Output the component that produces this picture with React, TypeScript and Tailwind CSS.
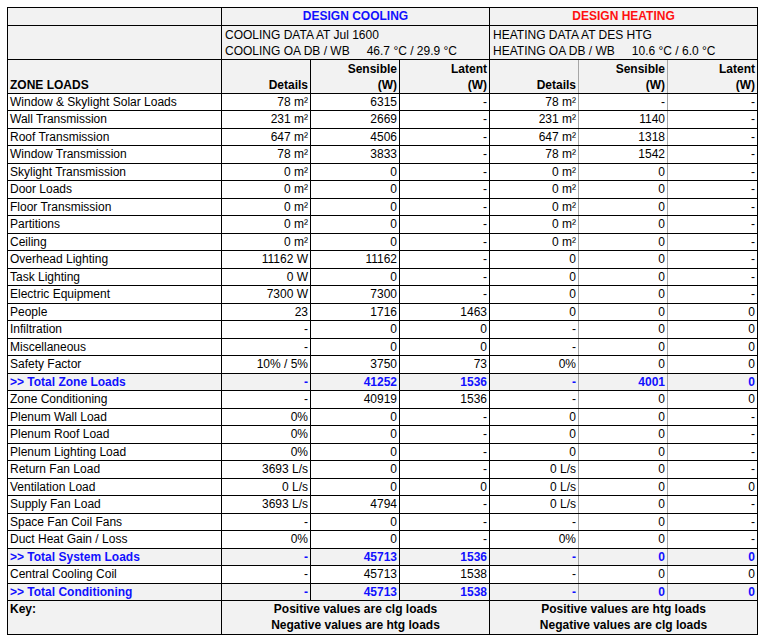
import React from "react";

type Row = { label: string; v: string[]; total?: boolean };

const rows: Row[] = [
  { label: "Window & Skylight Solar Loads", v: ["78 m²", "6315", "-", "78 m²", "-", "-"] },
  { label: "Wall Transmission", v: ["231 m²", "2669", "-", "231 m²", "1140", "-"] },
  { label: "Roof Transmission", v: ["647 m²", "4506", "-", "647 m²", "1318", "-"] },
  { label: "Window Transmission", v: ["78 m²", "3833", "-", "78 m²", "1542", "-"] },
  { label: "Skylight Transmission", v: ["0 m²", "0", "-", "0 m²", "0", "-"] },
  { label: "Door Loads", v: ["0 m²", "0", "-", "0 m²", "0", "-"] },
  { label: "Floor Transmission", v: ["0 m²", "0", "-", "0 m²", "0", "-"] },
  { label: "Partitions", v: ["0 m²", "0", "-", "0 m²", "0", "-"] },
  { label: "Ceiling", v: ["0 m²", "0", "-", "0 m²", "0", "-"] },
  { label: "Overhead Lighting", v: ["11162 W", "11162", "-", "0", "0", "-"] },
  { label: "Task Lighting", v: ["0 W", "0", "-", "0", "0", "-"] },
  { label: "Electric Equipment", v: ["7300 W", "7300", "-", "0", "0", "-"] },
  { label: "People", v: ["23", "1716", "1463", "0", "0", "0"] },
  { label: "Infiltration", v: ["-", "0", "0", "-", "0", "0"] },
  { label: "Miscellaneous", v: ["-", "0", "0", "-", "0", "0"] },
  { label: "Safety Factor", v: ["10% / 5%", "3750", "73", "0%", "0", "0"] },
  { label: ">> Total Zone Loads", v: ["-", "41252", "1536", "-", "4001", "0"], total: true },
  { label: "Zone Conditioning", v: ["-", "40919", "1536", "-", "0", "0"] },
  { label: "Plenum Wall Load", v: ["0%", "0", "-", "0", "0", "-"] },
  { label: "Plenum Roof Load", v: ["0%", "0", "-", "0", "0", "-"] },
  { label: "Plenum Lighting Load", v: ["0%", "0", "-", "0", "0", "-"] },
  { label: "Return Fan Load", v: ["3693 L/s", "0", "-", "0 L/s", "0", "-"] },
  { label: "Ventilation Load", v: ["0 L/s", "0", "0", "0 L/s", "0", "0"] },
  { label: "Supply Fan Load", v: ["3693 L/s", "4794", "-", "0 L/s", "0", "-"] },
  { label: "Space Fan Coil Fans", v: ["-", "0", "-", "-", "0", "-"] },
  { label: "Duct Heat Gain / Loss", v: ["0%", "0", "-", "0%", "0", "-"] },
  { label: ">> Total System Loads", v: ["-", "45713", "1536", "-", "0", "0"], total: true },
  { label: "Central Cooling Coil", v: ["-", "45713", "1538", "-", "0", "0"] },
  { label: ">> Total Conditioning", v: ["-", "45713", "1538", "-", "0", "0"], total: true },
];

const rowH = (i: number) => {
  const step = 507 / 29;
  const h = Math.round(93 + (i + 1) * step) - Math.round(93 + i * step);
  return h === 18 ? "h-[18px]" : "h-[17px]";
};

const valueBorder = (j: number) => {
  if (j === 3) return "border border-black border-r-[#a6a6a6]";
  if (j === 4) return "border border-black border-l-[#a6a6a6] border-r-[#a6a6a6]";
  if (j === 5) return "border border-black border-l-[#a6a6a6]";
  return "border border-black";
};

export default function App() {
  return (
    <div className="w-[765px] h-[644px] bg-white pt-[7px] pl-[7px] font-['Liberation_Sans',Arial,sans-serif]">
      <table className="table-fixed border-collapse w-[751px] text-[12px] leading-[15px] text-black">
        <colgroup>
          <col className="w-[214px]" />
          <col className="w-[89px]" />
          <col className="w-[89px]" />
          <col className="w-[90px]" />
          <col className="w-[89px]" />
          <col className="w-[89px]" />
          <col className="w-[90px]" />
        </colgroup>
        <tbody>
          <tr className="h-[18px] bg-[#f2f2f2]">
            <td className="border border-black p-0"></td>
            <td colSpan={3} className="border border-black p-0 text-center align-middle font-bold text-[#1010ff]">
              DESIGN COOLING
            </td>
            <td colSpan={3} className="border border-black p-0 text-center align-middle font-bold text-[#ff1010]">
              DESIGN HEATING
            </td>
          </tr>
          <tr className="h-[34px] bg-[#f2f2f2]">
            <td className="border border-black p-0"></td>
            <td colSpan={3} className="border border-black p-0 pl-[3px] align-middle leading-[16px]">
              <div>COOLING DATA AT Jul 1600</div>
              <div>
                COOLING OA DB / WB<span className="ml-[17px]">46.7 °C / 29.9 °C</span>
              </div>
            </td>
            <td colSpan={3} className="border border-black p-0 pl-[3px] align-middle leading-[16px]">
              <div>HEATING DATA AT DES HTG</div>
              <div>
                HEATING OA DB / WB<span className="ml-[17px]">10.6 °C / 6.0 °C</span>
              </div>
            </td>
          </tr>
          <tr className="h-[34px] bg-[#f2f2f2] font-bold leading-[16px]">
            <td className="border border-black p-0 pl-[2px] align-bottom">ZONE LOADS</td>
            <td className="border border-black p-0 pr-[2px] text-right align-bottom">Details</td>
            <td className="border border-black p-0 pr-[2px] text-right align-bottom">
              <div>Sensible</div>
              <div>(W)</div>
            </td>
            <td className="border border-black p-0 pr-[2px] text-right align-bottom">
              <div>Latent</div>
              <div>(W)</div>
            </td>
            <td className={`${valueBorder(3)} p-0 pr-[2px] text-right align-bottom`}>Details</td>
            <td className={`${valueBorder(4)} p-0 pr-[2px] text-right align-bottom`}>
              <div>Sensible</div>
              <div>(W)</div>
            </td>
            <td className={`${valueBorder(5)} p-0 pr-[2px] text-right align-bottom`}>
              <div>Latent</div>
              <div>(W)</div>
            </td>
          </tr>
          {rows.map((r, i) => (
            <tr
              key={r.label}
              className={`${rowH(i)} ${r.total ? "bg-[#f2f2f2] font-bold text-[#1010ff]" : "bg-white"}`}
            >
              <td className="border border-black p-0 pl-[2px] align-middle whitespace-nowrap">{r.label}</td>
              {r.v.map((val, j) => (
                <td key={j} className={`${valueBorder(j)} p-0 pr-[2px] text-right align-middle whitespace-nowrap`}>
                  {val}
                </td>
              ))}
            </tr>
          ))}
          <tr className="h-[34px] bg-[#f2f2f2] font-bold leading-[16px]">
            <td className="border border-black p-0 pl-[2px] align-top">Key:</td>
            <td colSpan={3} className="border border-black p-0 text-center align-top">
              <div>Positive values are clg loads</div>
              <div>Negative values are htg loads</div>
            </td>
            <td colSpan={3} className="border border-black p-0 text-center align-top">
              <div>Positive values are htg loads</div>
              <div>Negative values are clg loads</div>
            </td>
          </tr>
        </tbody>
      </table>
    </div>
  );
}
